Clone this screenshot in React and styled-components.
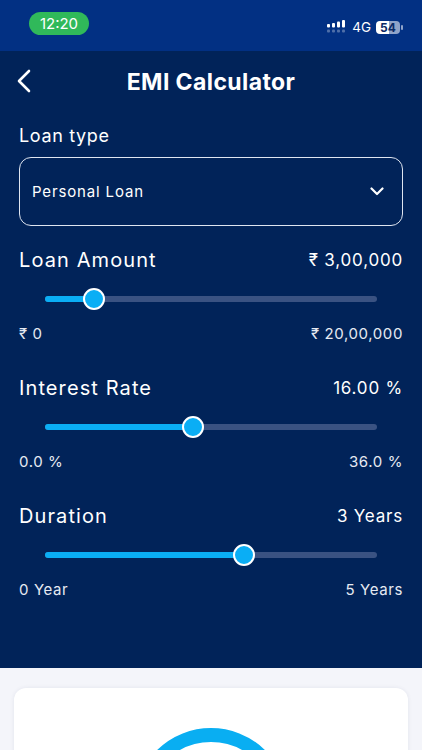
import styled, { createGlobalStyle } from "styled-components";

const GlobalStyle = createGlobalStyle`
  html, body {
    margin: 0;
    padding: 0;
    height: 750px;
    overflow: hidden;
    background: #f4f5fa;
    font-family: "Inter", "Liberation Sans", sans-serif;
  }
`;

const Page = styled.div`
  width: 422px;
  height: 750px;
  overflow: hidden;
  display: flex;
  flex-direction: column;
`;

const StatusBar = styled.div`
  flex: none;
  height: 51px;
  background: #023083;
  display: flex;
  align-items: flex-start;
  justify-content: space-between;
  padding: 12px 22px 0 29px;
  box-sizing: border-box;
`;

const TimePill = styled.div`
  width: 60px;
  height: 23px;
  border-radius: 12px;
  background: #30b95a;
  color: #fff;
  font-size: 15px;
  line-height: 23px;
  text-align: center;
`;

const StatusRight = styled.div`
  display: flex;
  align-items: center;
  gap: 5px;
  height: 30px;
`;

const NetworkLabel = styled.span`
  color: #fff;
  font-size: 13.5px;
`;

const Battery = styled.div`
  position: relative;
  width: 24px;
  height: 13px;
  border-radius: 4px;
  background: linear-gradient(90deg, #fff 54%, #8fa3c9 54%);
  color: #0b2a66;
  font-size: 12px;
  font-weight: 700;
  line-height: 13px;
  text-align: center;
  &::after {
    content: "";
    position: absolute;
    right: -3px;
    top: 4px;
    width: 2px;
    height: 5px;
    border-radius: 1px;
    background: #8fa3c9;
  }
`;

const Main = styled.div`
  flex: none;
  height: 617px;
  background: #012359;
  padding: 0 19px;
  box-sizing: border-box;
  color: #fff;
`;

const Header = styled.div`
  height: 62px;
  display: flex;
  align-items: center;
  justify-content: center;
  position: relative;
`;

const BackButton = styled.svg`
  position: absolute;
  left: -3px;
  top: 17px;
`;

const Title = styled.h1`
  margin: 0;
  font-size: 23px;
  font-weight: 700;
  letter-spacing: 0.4px;
`;

const FieldLabel = styled.div`
  margin-top: 12px;
  font-size: 18px;
  line-height: 22px;
  letter-spacing: 0.65px;
`;

const Select = styled.div`
  margin-top: 10px;
  height: 69px;
  border: 1px solid #dfe5f0;
  border-radius: 12px;
  box-sizing: border-box;
  display: flex;
  align-items: center;
  justify-content: space-between;
  padding: 0 18px 0 12px;
  font-size: 15px;
  letter-spacing: 0.85px;
`;

const SliderBlock = styled.div`
  margin-top: ${(p) => p.$top}px;
`;

const Row = styled.div`
  display: flex;
  justify-content: space-between;
  align-items: center;
`;

const SliderTitle = styled.span`
  font-size: 20px;
  line-height: 24px;
  letter-spacing: 1.1px;
`;

const SliderValue = styled.span`
  font-size: 17px;
  line-height: 24px;
  letter-spacing: 0.8px;
`;

const Limit = styled.span`
  font-size: 15px;
  line-height: 20px;
  letter-spacing: 0.6px;
  color: #e6eaf2;
`;

const Track = styled.div`
  position: relative;
  height: 6px;
  margin: 24px 26px 22px;
  border-radius: 3px;
  background: #3a5282;
`;

const Fill = styled.div`
  height: 100%;
  border-radius: 3px;
  background: #0aaef5;
`;

const Thumb = styled.div`
  position: absolute;
  top: 50%;
  width: 22px;
  height: 22px;
  box-sizing: border-box;
  border: 2.5px solid #fff;
  border-radius: 50%;
  background: #0aaef5;
  transform: translate(-50%, -50%);
`;

const Footer = styled.div`
  flex: 1;
  min-height: 0;
  background: #f4f5fa;
  padding: 20px 14px 0;
`;

const Card = styled.div`
  height: 200px;
  background: #fff;
  border-radius: 12px;
  box-shadow: 0 0 4px rgba(20, 40, 90, 0.08);
  padding-top: 40px;
  display: flex;
  justify-content: center;
  box-sizing: border-box;
`;

const Ring = styled.div`
  width: 154px;
  height: 154px;
  flex: none;
  box-sizing: border-box;
  border: 14px solid #09aef2;
  border-radius: 50%;
`;

function SignalIcon() {
  return (
    <svg width="20" height="16" viewBox="0 0 20 16">
      <g fill="#fff">
        <rect x="0" y="5" width="3" height="3.5" rx="1" />
        <rect x="5" y="4" width="3" height="4.5" rx="1" />
        <rect x="10" y="2.5" width="3" height="6" rx="1" />
        <rect x="15" y="1" width="3" height="7.5" rx="1" />
      </g>
      <g fill="#fff" opacity="0.3">
        <rect x="0" y="10.5" width="3" height="3" rx="1" />
        <rect x="5" y="10.5" width="3" height="3" rx="1" />
        <rect x="10" y="10.5" width="3" height="3" rx="1" />
        <rect x="15" y="10.5" width="3" height="3" rx="1" />
      </g>
    </svg>
  );
}

function Slider({ top, title, value, min, max, percent }) {
  return (
    <SliderBlock $top={top}>
      <Row>
        <SliderTitle>{title}</SliderTitle>
        <SliderValue>{value}</SliderValue>
      </Row>
      <Track>
        <Fill style={{ width: `${percent}%` }} />
        <Thumb style={{ left: `${percent}%` }} />
      </Track>
      <Row>
        <Limit>{min}</Limit>
        <Limit>{max}</Limit>
      </Row>
    </SliderBlock>
  );
}

export default function App() {
  return (
    <Page>
      <GlobalStyle />
      <StatusBar>
        <TimePill>12:20</TimePill>
        <StatusRight>
          <SignalIcon />
          <NetworkLabel>4G</NetworkLabel>
          <Battery>54</Battery>
        </StatusRight>
      </StatusBar>
      <Main>
        <Header>
          <BackButton width="16" height="26" viewBox="0 0 16 26" fill="none">
            <path d="M13 3 L3 13 L13 23" stroke="#fff" strokeWidth="2.6" strokeLinecap="round" strokeLinejoin="round" />
          </BackButton>
          <Title>EMI Calculator</Title>
        </Header>
        <FieldLabel>Loan type</FieldLabel>
        <Select>
          <span>Personal Loan</span>
          <svg width="14" height="9" viewBox="0 0 14 9" fill="none">
            <path d="M1.5 1.5 L7 7 L12.5 1.5" stroke="#fff" strokeWidth="2.2" strokeLinecap="round" strokeLinejoin="round" />
          </svg>
        </Select>
        <Slider top={22} title="Loan Amount" value="₹ 3,00,000" min="₹ 0" max="₹ 20,00,000" percent={14.8} />
        <Slider top={32} title="Interest Rate" value="16.00 %" min="0.0 %" max="36.0 %" percent={44.6} />
        <Slider top={32} title="Duration" value="3 Years" min="0 Year" max="5 Years" percent={60} />
      </Main>
      <Footer>
        <Card>
          <Ring />
        </Card>
      </Footer>
    </Page>
  );
}
